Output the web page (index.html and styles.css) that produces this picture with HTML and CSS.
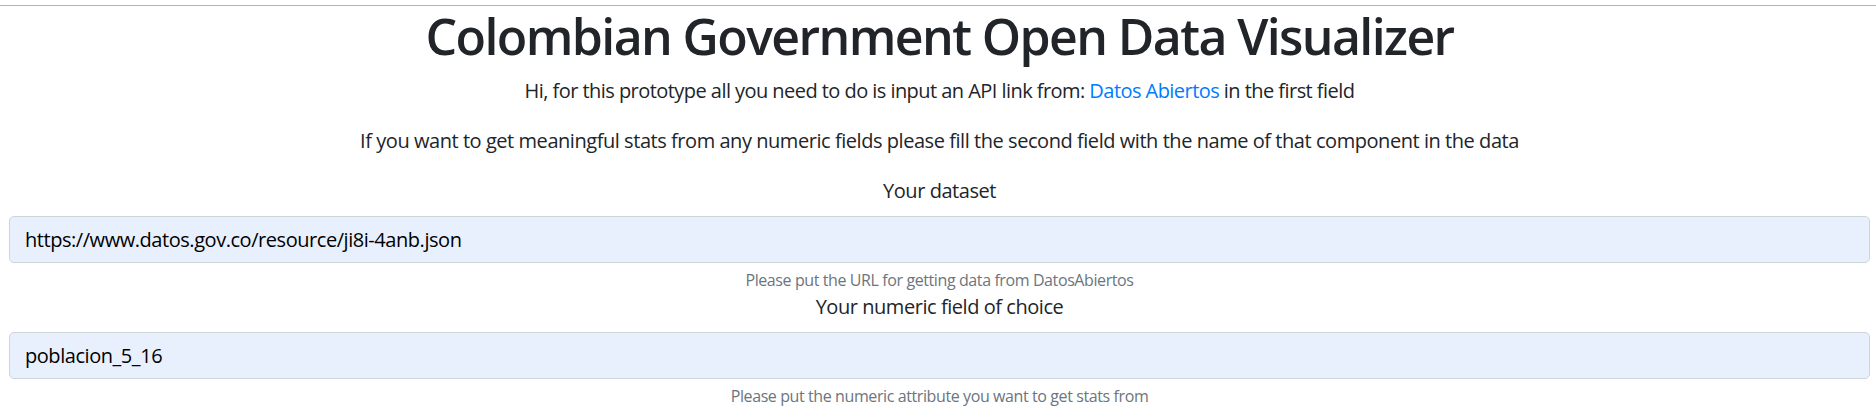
FILE: index.html
```html
<!DOCTYPE html>
<html lang="en">
<head>
<meta charset="utf-8">
<title>Colombian Government Open Data Visualizer</title>
<link rel="stylesheet" href="styles.css">
</head>
<body>
<div class="topline"></div>
<main class="container">
  <h1 class="title">Colombian Government Open Data Visualizer</h1>
  <p class="lead-text lead-text--intro">Hi, for this prototype all you need to do is input an API link from: <a href="#" class="link">Datos Abiertos</a> in the first field</p>
  <p class="lead-text">If you want to get meaningful stats from any numeric fields please fill the second field with the name of that component in the data</p>
  <form class="form">
    <div class="form-group">
      <label class="label" for="dataset">Your dataset</label>
      <input class="input" id="dataset" type="text" value="https://www.datos.gov.co/resource/ji8i-4anb.json">
      <small class="help">Please put the URL for getting data from DatosAbiertos</small>
    </div>
    <div class="form-group">
      <label class="label" for="field">Your numeric field of choice</label>
      <input class="input" id="field" type="text" value="poblacion_5_16">
      <small class="help">Please put the numeric attribute you want to get stats from</small>
    </div>
  </form>
</main>
</body>
</html>
```

FILE: styles.css
```css
* { box-sizing: border-box; }
html, body { margin: 0; padding: 0; background: #fff; }
body {
  font-family: "Open Sans", "Noto Sans", sans-serif;
  font-size: 20px;
  line-height: 1.5;
  color: #212529;
  letter-spacing: -0.45px;
}
.topline {
  margin-top: 5px;
  border-top: 1px solid #b4b4b4;
}
.container {
  padding: 0 6px 0 9px;
  text-align: center;
}
.title {
  margin: 0 0 10px 0;
  font-size: 50px;
  font-weight: 600;
  line-height: 60px;
  letter-spacing: -1.6px;
}
.lead-text {
  margin: 0 0 20px 0;
  line-height: 30px;
}
.lead-text--intro { letter-spacing: -0.55px; }
.link { color: #007bff; text-decoration: none; }
.form { margin: 0; }
.form-group {
  display: flex;
  flex-direction: column;
  align-items: stretch;
}
.label {
  display: block;
  line-height: 30px;
  margin-bottom: 10px;
}
.input {
  display: block;
  width: 100%;
  height: 47px;
  padding: 0 15px;
  font-family: inherit;
  font-size: 20px;
  letter-spacing: -0.45px;
  color: #000;
  background: #e8f0fe;
  border: 1px solid #ced4da;
  border-radius: 5px;
  text-align: left;
}
.help {
  display: block;
  margin-top: 5px;
  font-size: 16px;
  line-height: 24px;
  letter-spacing: -0.4px;
  color: #6c757d;
}
```
